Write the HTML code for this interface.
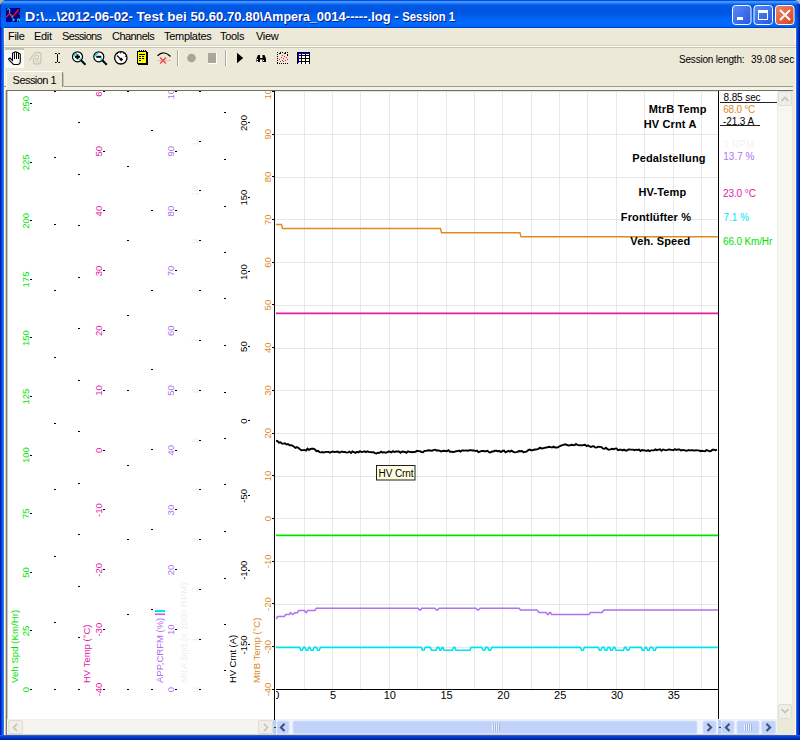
<!DOCTYPE html><html><head><meta charset="utf-8"><style>html,body{margin:0;padding:0;background:#fff;width:800px;height:740px;overflow:hidden}svg{display:block}text{font-family:"Liberation Sans",sans-serif}</style></head><body>
<svg width="800" height="740" viewBox="0 0 800 740">
<rect x="0" y="0" width="800" height="740" fill="#0054E3" shape-rendering="crispEdges" />
<rect x="0" y="0" width="800" height="1" fill="#0A48DA" shape-rendering="crispEdges" />
<rect x="0" y="1" width="800" height="1" fill="#3F98FF" shape-rendering="crispEdges" />
<rect x="0" y="2" width="800" height="1" fill="#3690FF" shape-rendering="crispEdges" />
<rect x="0" y="3" width="800" height="1" fill="#1A77F8" shape-rendering="crispEdges" />
<rect x="0" y="4" width="800" height="1" fill="#0864EE" shape-rendering="crispEdges" />
<rect x="0" y="5" width="800" height="1" fill="#045BE5" shape-rendering="crispEdges" />
<rect x="0" y="6" width="800" height="1" fill="#0057E2" shape-rendering="crispEdges" />
<rect x="0" y="7" width="800" height="1" fill="#0057E2" shape-rendering="crispEdges" />
<rect x="0" y="8" width="800" height="1" fill="#0056E1" shape-rendering="crispEdges" />
<rect x="0" y="9" width="800" height="1" fill="#0056E1" shape-rendering="crispEdges" />
<rect x="0" y="10" width="800" height="1" fill="#0056E1" shape-rendering="crispEdges" />
<rect x="0" y="11" width="800" height="1" fill="#0056E1" shape-rendering="crispEdges" />
<rect x="0" y="12" width="800" height="1" fill="#0057E3" shape-rendering="crispEdges" />
<rect x="0" y="13" width="800" height="1" fill="#0058E5" shape-rendering="crispEdges" />
<rect x="0" y="14" width="800" height="1" fill="#005AE8" shape-rendering="crispEdges" />
<rect x="0" y="15" width="800" height="1" fill="#005CEA" shape-rendering="crispEdges" />
<rect x="0" y="16" width="800" height="1" fill="#005EEC" shape-rendering="crispEdges" />
<rect x="0" y="17" width="800" height="1" fill="#0060EF" shape-rendering="crispEdges" />
<rect x="0" y="18" width="800" height="1" fill="#0062F2" shape-rendering="crispEdges" />
<rect x="0" y="19" width="800" height="1" fill="#0064F5" shape-rendering="crispEdges" />
<rect x="0" y="20" width="800" height="1" fill="#0066F8" shape-rendering="crispEdges" />
<rect x="0" y="21" width="800" height="1" fill="#0068FB" shape-rendering="crispEdges" />
<rect x="0" y="22" width="800" height="1" fill="#0069FC" shape-rendering="crispEdges" />
<rect x="0" y="23" width="800" height="1" fill="#0069FD" shape-rendering="crispEdges" />
<rect x="0" y="24" width="800" height="1" fill="#0068FC" shape-rendering="crispEdges" />
<rect x="0" y="25" width="800" height="1" fill="#0066F9" shape-rendering="crispEdges" />
<rect x="0" y="26" width="800" height="1" fill="#0060F0" shape-rendering="crispEdges" />
<rect x="0" y="27" width="800" height="1" fill="#0040D0" shape-rendering="crispEdges" />
<rect x="0" y="27" width="1" height="713" fill="#0016C8" shape-rendering="crispEdges" />
<rect x="1" y="27" width="1" height="713" fill="#0046DE" shape-rendering="crispEdges" />
<rect x="2" y="27" width="1" height="713" fill="#0A62EE" shape-rendering="crispEdges" />
<rect x="3" y="27" width="1" height="713" fill="#3A78D8" shape-rendering="crispEdges" />
<rect x="796" y="27" width="1" height="713" fill="#2A62EE" shape-rendering="crispEdges" />
<rect x="797" y="27" width="1" height="713" fill="#0046E4" shape-rendering="crispEdges" />
<rect x="798" y="27" width="1" height="713" fill="#002EC0" shape-rendering="crispEdges" />
<rect x="799" y="27" width="1" height="713" fill="#001890" shape-rendering="crispEdges" />
<defs><linearGradient id="rb" x1="0" y1="0" x2="1" y2="0"><stop offset="0" stop-color="#0058E8" stop-opacity="0"/><stop offset="1" stop-color="#0020A0"/></linearGradient></defs>
<rect x="794" y="4" width="6" height="23" fill="url(#rb)" shape-rendering="crispEdges" />
<rect x="0" y="4" width="1" height="23" fill="#0036C8" shape-rendering="crispEdges" />
<rect x="0" y="735" width="800" height="1" fill="#2A5AD8" shape-rendering="crispEdges" />
<rect x="0" y="736" width="800" height="1" fill="#0044DC" shape-rendering="crispEdges" />
<rect x="0" y="737" width="800" height="1" fill="#003AD0" shape-rendering="crispEdges" />
<rect x="0" y="738" width="800" height="1" fill="#002EB8" shape-rendering="crispEdges" />
<rect x="0" y="739" width="800" height="1" fill="#00208C" shape-rendering="crispEdges" />
<rect x="4" y="28" width="792" height="707" fill="#ECE9D8" shape-rendering="crispEdges" />
<rect x="4" y="28" width="1" height="707" fill="#FFFCE0" shape-rendering="crispEdges" />
<rect x="795" y="28" width="1" height="707" fill="#FFFCDC" shape-rendering="crispEdges" />
<path d="M0 0 H5 Q1 1 0 5 Z" fill="#C8B878"/>
<path d="M800 0 H795 Q799 1 800 5 Z" fill="#B0B8D8"/>
<rect x="6" y="8" width="14" height="14" fill="#00008C" shape-rendering="crispEdges" />
<path d="M6 17.6 L9.6 13.3 L12.3 17.2 L18.6 9.4" stroke="#FF1010" stroke-width="1.3" fill="none"/>
<path d="M18.5 12.4 H20 M19 14.4 H20.5" stroke="#FF1010" stroke-width="0.9" fill="none"/>
<path d="M7.3 9.8 Q8.5 7.8 9.6 9.6 Q10.2 11 9.2 12.8" stroke="#20E0E8" stroke-width="1.1" fill="none"/>
<path d="M10.5 14.5 L11 15 M12.3 15.5 V17.5 M12.5 18.5 L14.3 19.8 L12.5 21.3 M17.6 21.5 V19.8 Q18.5 17.8 19.4 19.8 V21.5" stroke="#20E0E8" stroke-width="1.1" fill="none"/>
<text x="25.8" y="21.8" font-size="13.6" fill="#0A1E8E" font-weight="bold" textLength="35.65" lengthAdjust="spacingAndGlyphs">D:\...\</text>
<text x="61.45" y="21.8" font-size="13.6" fill="#0A1E8E" font-weight="bold" textLength="76.15" lengthAdjust="spacingAndGlyphs">2012-06-02-&#160;</text>
<text x="137.6" y="21.8" font-size="13.6" fill="#0A1E8E" font-weight="bold" textLength="53.9" lengthAdjust="spacingAndGlyphs">Test&#160;bei&#160;</text>
<text x="191.5" y="21.8" font-size="13.6" fill="#0A1E8E" font-weight="bold" textLength="69.3" lengthAdjust="spacingAndGlyphs">50.60.70.80</text>
<text x="260.8" y="21.8" font-size="13.6" fill="#0A1E8E" font-weight="bold" textLength="57" lengthAdjust="spacingAndGlyphs">\Ampera_</text>
<text x="317.8" y="21.8" font-size="13.6" fill="#0A1E8E" font-weight="bold" textLength="85.5" lengthAdjust="spacingAndGlyphs">0014-----.log&#160;-&#160;</text>
<text x="403.3" y="21.8" font-size="13.6" fill="#0A1E8E" font-weight="bold" textLength="52.7" lengthAdjust="spacingAndGlyphs">Session&#160;1</text>
<text x="24.8" y="20.8" font-size="13.6" fill="#FFFFFF" font-weight="bold" textLength="35.65" lengthAdjust="spacingAndGlyphs">D:\...\</text>
<text x="60.45" y="20.8" font-size="13.6" fill="#FFFFFF" font-weight="bold" textLength="76.15" lengthAdjust="spacingAndGlyphs">2012-06-02-&#160;</text>
<text x="136.6" y="20.8" font-size="13.6" fill="#FFFFFF" font-weight="bold" textLength="53.9" lengthAdjust="spacingAndGlyphs">Test&#160;bei&#160;</text>
<text x="190.5" y="20.8" font-size="13.6" fill="#FFFFFF" font-weight="bold" textLength="69.3" lengthAdjust="spacingAndGlyphs">50.60.70.80</text>
<text x="259.8" y="20.8" font-size="13.6" fill="#FFFFFF" font-weight="bold" textLength="57" lengthAdjust="spacingAndGlyphs">\Ampera_</text>
<text x="316.8" y="20.8" font-size="13.6" fill="#FFFFFF" font-weight="bold" textLength="85.5" lengthAdjust="spacingAndGlyphs">0014-----.log&#160;-&#160;</text>
<text x="402.3" y="20.8" font-size="13.6" fill="#FFFFFF" font-weight="bold" textLength="52.7" lengthAdjust="spacingAndGlyphs">Session&#160;1</text>
<defs><linearGradient id="cb1" x1="0" y1="0" x2="1" y2="1"><stop offset="0" stop-color="#5A8CF8"/><stop offset="1" stop-color="#2455E0"/></linearGradient></defs>
<rect x="732.5" y="5.5" width="18.5" height="19" rx="3" ry="3" fill="url(#cb1)" stroke="#FFFFFF" stroke-width="1"/>
<rect x="737" y="17" width="6" height="3" fill="#FFFFFF" shape-rendering="crispEdges" />
<defs><linearGradient id="cb2" x1="0" y1="0" x2="1" y2="1"><stop offset="0" stop-color="#5A8CF8"/><stop offset="1" stop-color="#2455E0"/></linearGradient></defs>
<rect x="754.0" y="5.5" width="18.5" height="19" rx="3" ry="3" fill="url(#cb2)" stroke="#FFFFFF" stroke-width="1"/>
<rect x="758.5" y="10.5" width="9" height="9" fill="none" stroke="#FFFFFF" stroke-width="1"/>
<rect x="758" y="10" width="10" height="3" fill="#FFFFFF" shape-rendering="crispEdges" />
<defs><linearGradient id="cb3" x1="0" y1="0" x2="1" y2="1"><stop offset="0" stop-color="#F08868"/><stop offset="1" stop-color="#D8401E"/></linearGradient></defs>
<rect x="775.5" y="5.5" width="18.5" height="19" rx="3" ry="3" fill="url(#cb3)" stroke="#FFFFFF" stroke-width="1"/>
<path d="M780 10 L790 20 M790 10 L780 20" stroke="#FFFFFF" stroke-width="2"/>
<text x="8" y="40" font-size="11" fill="#000000" letter-spacing="-0.3">File</text>
<text x="34" y="40" font-size="11" fill="#000000" letter-spacing="-0.3">Edit</text>
<text x="62" y="40" font-size="11" fill="#000000" letter-spacing="-0.65">Sessions</text>
<text x="112" y="40" font-size="11" fill="#000000" letter-spacing="-0.55">Channels</text>
<text x="164" y="40" font-size="11" fill="#000000" letter-spacing="-0.3">Templates</text>
<text x="220" y="40" font-size="11" fill="#000000" letter-spacing="-0.3">Tools</text>
<text x="256" y="40" font-size="11" fill="#000000" letter-spacing="-0.3">View</text>
<rect x="4" y="45" width="792" height="1" fill="#D8D2BD" shape-rendering="crispEdges" />
<rect x="4" y="46" width="792" height="1" fill="#FFFFFF" shape-rendering="crispEdges" />
<rect x="4" y="47" width="792" height="1" fill="#C9C5B3" shape-rendering="crispEdges" />
<rect x="4" y="48" width="20" height="20" fill="#F4F3EE" shape-rendering="crispEdges" />
<text x="679" y="63" font-size="10" fill="#000000" letter-spacing="-0.2">Session length:</text>
<text x="751" y="63" font-size="10" fill="#000000" >39.08 sec</text>
<defs><pattern id="dith" width="2" height="2" patternUnits="userSpaceOnUse"><rect width="2" height="2" fill="#F8F7F3"/><rect width="1" height="1" fill="#FFFFFF"/><rect x="1" y="1" width="1" height="1" fill="#FFFFFF"/></pattern></defs>
<rect x="5" y="48" width="19" height="2" fill="#C9C5B3" shape-rendering="crispEdges" />
<rect x="5" y="50" width="19" height="18" fill="url(#dith)" shape-rendering="crispEdges" />
<path d="M9.5 60.5 L8.5 59 L10 58 L12.5 60.5 L12.5 53.5 Q12.5 52.5 13.5 52.5 Q14.5 52.5 14.5 53.5 L14.5 52.5 Q14.5 51.8 15.5 51.8 Q16.5 51.8 16.5 52.5 L16.5 53 Q16.5 52.2 17.5 52.2 Q18.5 52.2 18.5 53.2 L18.5 54 Q18.5 53.5 19.3 53.5 Q20.3 53.5 20.3 54.5 L20.3 61 Q20.3 64.5 17.5 64.5 L13.5 64.5 Z" fill="#FFFFFF" stroke="#000000" stroke-width="1.1"/>
<path d="M14.5 53.5 V59 M16.5 53 V59 M18.5 54 V59" stroke="#000000" stroke-width="1"/>
<path d="M29.5 60 L33 55.5 L35 53 L39 52.5 Q41 52.5 41 54.5 L41 60 Q41 64 38 64 L35 64 Q33.5 64 33.5 62 L33.5 58" fill="none" stroke="#C2BFB2" stroke-width="1.1"/>
<path d="M35 55.5 H38.5 V58.5 H35 Z M36 59 V63 M38 59 V63" fill="none" stroke="#D0CDC0" stroke-width="1"/>
<path d="M55 53.5 H56.5 L57.5 54.5 L58.5 53.5 H60 M57.5 54.5 V62 M55 62.5 H56.5 L57.5 61.5 L58.5 62.5 H60" fill="none" stroke="#000000" stroke-width="1"/>
<circle cx="77.5" cy="56.8" r="5" fill="#FFFFFF" stroke="#000000" stroke-width="1.2"/>
<path d="M73.9 56.3 A3.8 3.8 0 0 1 77.0 53.199999999999996" fill="none" stroke="#00D8E8" stroke-width="1.4"/>
<path d="M81.1 58.0 A3.8 3.8 0 0 1 78.7 60.4" fill="none" stroke="#00D8E8" stroke-width="1.4"/>
<path d="M75.0 56.8 H80.0" stroke="#000000" stroke-width="2"/>
<path d="M77.5 54.3 V59.3" stroke="#000000" stroke-width="2"/>
<path d="M81.0 60.3 L85.5 64.8" stroke="#000000" stroke-width="2"/>
<circle cx="98.8" cy="56.8" r="5" fill="#FFFFFF" stroke="#000000" stroke-width="1.2"/>
<path d="M95.2 56.3 A3.8 3.8 0 0 1 98.3 53.199999999999996" fill="none" stroke="#00D8E8" stroke-width="1.4"/>
<path d="M102.39999999999999 58.0 A3.8 3.8 0 0 1 100.0 60.4" fill="none" stroke="#00D8E8" stroke-width="1.4"/>
<path d="M96.3 56.8 H101.3" stroke="#000000" stroke-width="2"/>
<path d="M102.3 60.3 L106.8 64.8" stroke="#000000" stroke-width="2"/>
<circle cx="120.8" cy="57.8" r="6.2" fill="#FFFFFF" stroke="#000000" stroke-width="1.3"/>
<path d="M117 53 L118 54 M120.8 52 V53.4 M124.6 53 L123.6 54 M126 56 L124.8 56.6" stroke="#000000" stroke-width="1"/>
<path d="M117 55.5 L121 59.5" stroke="#000000" stroke-width="1.1"/>
<path d="M121.2 57.6 L123 59.4 L121.2 61.2 L119.4 59.4 Z" fill="#000000"/>
<rect x="138" y="52" width="10" height="13" fill="#000000" shape-rendering="crispEdges" />
<rect x="137.5" y="51.5" width="9" height="12" fill="#FFFF00" shape-rendering="crispEdges" stroke="#000000" stroke-width="1"/>
<rect x="139" y="50" width="1" height="2" fill="#000000" shape-rendering="crispEdges" />
<rect x="141" y="50" width="1" height="2" fill="#000000" shape-rendering="crispEdges" />
<rect x="143" y="50" width="1" height="2" fill="#000000" shape-rendering="crispEdges" />
<rect x="145" y="50" width="1" height="2" fill="#000000" shape-rendering="crispEdges" />
<rect x="139" y="54" width="6" height="1" fill="#000000" shape-rendering="crispEdges" />
<rect x="139" y="56" width="2" height="1" fill="#000000" shape-rendering="crispEdges" />
<rect x="142" y="56" width="2" height="1" fill="#000000" shape-rendering="crispEdges" />
<rect x="139" y="58" width="2" height="1" fill="#000000" shape-rendering="crispEdges" />
<rect x="142" y="58" width="2" height="1" fill="#000000" shape-rendering="crispEdges" />
<rect x="139" y="60" width="2" height="1" fill="#000000" shape-rendering="crispEdges" />
<path d="M157.5 55.8 Q161 52.5 164 53 Q167 53 170.5 56.5" fill="none" stroke="#000000" stroke-width="1.2"/>
<path d="M157.5 60.5 H171" stroke="#C8C8C0" stroke-width="1"/>
<path d="M160 57.5 L166 63.5 M166 57.5 L160 63.5" stroke="#FF4040" stroke-width="1.3"/>
<rect x="177" y="50" width="1" height="16" fill="#ACA899" shape-rendering="crispEdges" />
<rect x="178" y="50" width="1" height="16" fill="#FFFFFF" shape-rendering="crispEdges" />
<rect x="225" y="50" width="1" height="16" fill="#ACA899" shape-rendering="crispEdges" />
<rect x="226" y="50" width="1" height="16" fill="#FFFFFF" shape-rendering="crispEdges" />
<circle cx="191.5" cy="58" r="4.3" fill="#A8A597"/>
<rect x="208" y="53" width="8" height="10" fill="#ACA899" shape-rendering="crispEdges" />
<rect x="216" y="53" width="1" height="11" fill="#FFFFFF" shape-rendering="crispEdges" />
<rect x="208" y="63" width="9" height="1" fill="#FFFFFF" shape-rendering="crispEdges" />
<path d="M237 52.8 L243.2 58 L237 63.2 Z" fill="#000000"/>
<path d="M256.5 62 V58.5 L258 55 H260 V58 H262.5 V55 H264.5 L266 58.5 V62 H262.5 V59.5 H260 V62 Z" fill="#000000"/>
<rect x="257" y="59" width="1" height="1" fill="#FFFFFF" shape-rendering="crispEdges" />
<rect x="257" y="61" width="1" height="1" fill="#FFFFFF" shape-rendering="crispEdges" />
<rect x="263" y="60" width="1" height="1" fill="#FFFFFF" shape-rendering="crispEdges" />
<rect x="277" y="52" width="1" height="1" fill="#000000" shape-rendering="crispEdges" />
<rect x="277" y="54" width="1" height="1" fill="#000000" shape-rendering="crispEdges" />
<rect x="277" y="56" width="1" height="1" fill="#000000" shape-rendering="crispEdges" />
<rect x="277" y="58" width="1" height="1" fill="#000000" shape-rendering="crispEdges" />
<rect x="277" y="60" width="1" height="1" fill="#000000" shape-rendering="crispEdges" />
<rect x="277" y="62" width="1" height="1" fill="#000000" shape-rendering="crispEdges" />
<rect x="277" y="63" width="1" height="1" fill="#000000" shape-rendering="crispEdges" />
<rect x="279" y="63" width="1" height="1" fill="#000000" shape-rendering="crispEdges" />
<rect x="281" y="63" width="1" height="1" fill="#000000" shape-rendering="crispEdges" />
<rect x="283" y="63" width="1" height="1" fill="#000000" shape-rendering="crispEdges" />
<rect x="285" y="63" width="1" height="1" fill="#000000" shape-rendering="crispEdges" />
<rect x="287" y="63" width="1" height="1" fill="#000000" shape-rendering="crispEdges" />
<rect x="280" y="52" width="1" height="1" fill="#000000" shape-rendering="crispEdges" />
<rect x="282" y="52" width="1" height="1" fill="#000000" shape-rendering="crispEdges" />
<rect x="285" y="52" width="1" height="1" fill="#000000" shape-rendering="crispEdges" />
<rect x="287" y="52" width="1" height="1" fill="#000000" shape-rendering="crispEdges" />
<rect x="279" y="53" width="2" height="1" fill="#000000" shape-rendering="crispEdges" />
<rect x="284" y="53" width="2" height="1" fill="#000000" shape-rendering="crispEdges" />
<rect x="287" y="54" width="1" height="2" fill="#000000" shape-rendering="crispEdges" />
<rect x="279" y="59" width="1" height="1" fill="#FF2020" shape-rendering="crispEdges" />
<rect x="281" y="57" width="1" height="1" fill="#FF2020" shape-rendering="crispEdges" />
<rect x="282" y="55" width="1" height="1" fill="#FF2020" shape-rendering="crispEdges" />
<rect x="283" y="58" width="1" height="1" fill="#FF2020" shape-rendering="crispEdges" />
<rect x="284" y="56" width="1" height="1" fill="#FF2020" shape-rendering="crispEdges" />
<rect x="285" y="60" width="1" height="1" fill="#FF2020" shape-rendering="crispEdges" />
<rect x="286" y="57" width="1" height="1" fill="#FF2020" shape-rendering="crispEdges" />
<rect x="283" y="61" width="1" height="1" fill="#FF2020" shape-rendering="crispEdges" />
<rect x="280" y="61" width="1" height="1" fill="#FF2020" shape-rendering="crispEdges" />
<rect x="287" y="59" width="1" height="1" fill="#FF2020" shape-rendering="crispEdges" />
<rect x="282" y="60" width="1" height="1" fill="#FF2020" shape-rendering="crispEdges" />
<rect x="297" y="52" width="13" height="12" fill="#000000" shape-rendering="crispEdges" />
<rect x="298" y="53" width="3" height="2" fill="#FFFFFF" shape-rendering="crispEdges" />
<rect x="302" y="53" width="3" height="2" fill="#FFFFFF" shape-rendering="crispEdges" />
<rect x="306" y="53" width="3" height="2" fill="#FFFFFF" shape-rendering="crispEdges" />
<rect x="298" y="56" width="3" height="2" fill="#FFFFFF" shape-rendering="crispEdges" />
<rect x="302" y="56" width="3" height="2" fill="#FFFFFF" shape-rendering="crispEdges" />
<rect x="306" y="56" width="3" height="2" fill="#FFFFFF" shape-rendering="crispEdges" />
<rect x="298" y="59" width="3" height="2" fill="#FFFFFF" shape-rendering="crispEdges" />
<rect x="302" y="59" width="3" height="2" fill="#FFFFFF" shape-rendering="crispEdges" />
<rect x="306" y="59" width="3" height="2" fill="#FFFFFF" shape-rendering="crispEdges" />
<rect x="298" y="62" width="3" height="2" fill="#FFFFFF" shape-rendering="crispEdges" />
<rect x="302" y="62" width="3" height="2" fill="#FFFFFF" shape-rendering="crispEdges" />
<rect x="306" y="62" width="3" height="2" fill="#FFFFFF" shape-rendering="crispEdges" />
<rect x="298" y="53" width="11" height="1" fill="#0000FF" shape-rendering="crispEdges" />
<rect x="298" y="53" width="1" height="10" fill="#0000FF" shape-rendering="crispEdges" />
<rect x="4" y="86" width="789" height="1" fill="#9D9A8D" shape-rendering="crispEdges" />
<rect x="4" y="87" width="789" height="3" fill="#F6F3E6" shape-rendering="crispEdges" />
<rect x="6" y="90" width="787" height="1" fill="#716F64" shape-rendering="crispEdges" />
<path d="M6.5 88 V73 Q6.5 71.5 8 71.5 H61.5" fill="none" stroke="#FFFFFF" stroke-width="1" shape-rendering="crispEdges"/>
<rect x="7" y="72" width="55" height="18" fill="#ECE9D8" shape-rendering="crispEdges" />
<rect x="62" y="72" width="1" height="15" fill="#8F8C80" shape-rendering="crispEdges" />
<rect x="63" y="73" width="1" height="14" fill="#C8C4B4" shape-rendering="crispEdges" />
<text x="12.6" y="84.3" font-size="11" fill="#000000" letter-spacing="-0.55">Session 1</text>
<rect x="5" y="91" width="1" height="644" fill="#D0D0C0" shape-rendering="crispEdges" />
<rect x="6" y="91" width="1" height="644" fill="#7E7D6C" shape-rendering="crispEdges" />
<rect x="7" y="91" width="1" height="644" fill="#C8C8C8" shape-rendering="crispEdges" />
<rect x="8" y="91" width="769" height="628" fill="#FFFFFF" shape-rendering="crispEdges" />
<rect x="304" y="91" width="1" height="598" fill="#E8E8E8" shape-rendering="crispEdges" />
<rect x="332" y="91" width="1" height="598" fill="#E8E8E8" shape-rendering="crispEdges" />
<rect x="360" y="91" width="1" height="598" fill="#E8E8E8" shape-rendering="crispEdges" />
<rect x="389" y="91" width="1" height="598" fill="#E8E8E8" shape-rendering="crispEdges" />
<rect x="417" y="91" width="1" height="598" fill="#E8E8E8" shape-rendering="crispEdges" />
<rect x="446" y="91" width="1" height="598" fill="#E8E8E8" shape-rendering="crispEdges" />
<rect x="474" y="91" width="1" height="598" fill="#E8E8E8" shape-rendering="crispEdges" />
<rect x="502" y="91" width="1" height="598" fill="#E8E8E8" shape-rendering="crispEdges" />
<rect x="531" y="91" width="1" height="598" fill="#E8E8E8" shape-rendering="crispEdges" />
<rect x="559" y="91" width="1" height="598" fill="#E8E8E8" shape-rendering="crispEdges" />
<rect x="587" y="91" width="1" height="598" fill="#E8E8E8" shape-rendering="crispEdges" />
<rect x="616" y="91" width="1" height="598" fill="#E8E8E8" shape-rendering="crispEdges" />
<rect x="644" y="91" width="1" height="598" fill="#E8E8E8" shape-rendering="crispEdges" />
<rect x="673" y="91" width="1" height="598" fill="#E8E8E8" shape-rendering="crispEdges" />
<rect x="701" y="91" width="1" height="598" fill="#E8E8E8" shape-rendering="crispEdges" />
<rect x="275" y="647" width="443" height="1" fill="#E6E6E6" shape-rendering="crispEdges" />
<rect x="275" y="604" width="443" height="1" fill="#E6E6E6" shape-rendering="crispEdges" />
<rect x="275" y="561" width="443" height="1" fill="#E6E6E6" shape-rendering="crispEdges" />
<rect x="275" y="518" width="443" height="1" fill="#E6E6E6" shape-rendering="crispEdges" />
<rect x="275" y="476" width="443" height="1" fill="#E6E6E6" shape-rendering="crispEdges" />
<rect x="275" y="433" width="443" height="1" fill="#E6E6E6" shape-rendering="crispEdges" />
<rect x="275" y="390" width="443" height="1" fill="#E6E6E6" shape-rendering="crispEdges" />
<rect x="275" y="348" width="443" height="1" fill="#E6E6E6" shape-rendering="crispEdges" />
<rect x="275" y="305" width="443" height="1" fill="#E6E6E6" shape-rendering="crispEdges" />
<rect x="275" y="262" width="443" height="1" fill="#E6E6E6" shape-rendering="crispEdges" />
<rect x="275" y="219" width="443" height="1" fill="#E6E6E6" shape-rendering="crispEdges" />
<rect x="275" y="177" width="443" height="1" fill="#E6E6E6" shape-rendering="crispEdges" />
<rect x="275" y="134" width="443" height="1" fill="#E6E6E6" shape-rendering="crispEdges" />
<rect x="275" y="91" width="443" height="1" fill="#E6E6E6" shape-rendering="crispEdges" />
<rect x="274" y="91" width="1" height="629" fill="#000000" shape-rendering="crispEdges" />
<rect x="276" y="689" width="442" height="1" fill="#000000" shape-rendering="crispEdges" />
<rect x="718" y="91" width="1" height="629" fill="#000000" shape-rendering="crispEdges" />
<rect x="30" y="689" width="2" height="1" fill="#000000" shape-rendering="crispEdges" />
<rect x="30" y="630" width="2" height="1" fill="#000000" shape-rendering="crispEdges" />
<rect x="30" y="572" width="2" height="1" fill="#000000" shape-rendering="crispEdges" />
<rect x="30" y="513" width="2" height="1" fill="#000000" shape-rendering="crispEdges" />
<rect x="30" y="455" width="2" height="1" fill="#000000" shape-rendering="crispEdges" />
<rect x="30" y="396" width="2" height="1" fill="#000000" shape-rendering="crispEdges" />
<rect x="30" y="337" width="2" height="1" fill="#000000" shape-rendering="crispEdges" />
<rect x="30" y="279" width="2" height="1" fill="#000000" shape-rendering="crispEdges" />
<rect x="30" y="220" width="2" height="1" fill="#000000" shape-rendering="crispEdges" />
<rect x="30" y="162" width="2" height="1" fill="#000000" shape-rendering="crispEdges" />
<rect x="30" y="103" width="2" height="1" fill="#000000" shape-rendering="crispEdges" />
<rect x="54" y="689" width="2" height="1" fill="#000000" shape-rendering="crispEdges" />
<rect x="54" y="622" width="2" height="1" fill="#000000" shape-rendering="crispEdges" />
<rect x="54" y="556" width="2" height="1" fill="#000000" shape-rendering="crispEdges" />
<rect x="54" y="489" width="2" height="1" fill="#000000" shape-rendering="crispEdges" />
<rect x="54" y="423" width="2" height="1" fill="#000000" shape-rendering="crispEdges" />
<rect x="54" y="357" width="2" height="1" fill="#000000" shape-rendering="crispEdges" />
<rect x="54" y="290" width="2" height="1" fill="#000000" shape-rendering="crispEdges" />
<rect x="54" y="224" width="2" height="1" fill="#000000" shape-rendering="crispEdges" />
<rect x="54" y="157" width="2" height="1" fill="#000000" shape-rendering="crispEdges" />
<rect x="54" y="91" width="2" height="1" fill="#000000" shape-rendering="crispEdges" />
<rect x="78" y="689" width="2" height="1" fill="#000000" shape-rendering="crispEdges" />
<rect x="78" y="637" width="2" height="1" fill="#000000" shape-rendering="crispEdges" />
<rect x="78" y="586" width="2" height="1" fill="#000000" shape-rendering="crispEdges" />
<rect x="78" y="534" width="2" height="1" fill="#000000" shape-rendering="crispEdges" />
<rect x="78" y="483" width="2" height="1" fill="#000000" shape-rendering="crispEdges" />
<rect x="78" y="431" width="2" height="1" fill="#000000" shape-rendering="crispEdges" />
<rect x="78" y="380" width="2" height="1" fill="#000000" shape-rendering="crispEdges" />
<rect x="78" y="328" width="2" height="1" fill="#000000" shape-rendering="crispEdges" />
<rect x="78" y="277" width="2" height="1" fill="#000000" shape-rendering="crispEdges" />
<rect x="78" y="225" width="2" height="1" fill="#000000" shape-rendering="crispEdges" />
<rect x="78" y="174" width="2" height="1" fill="#000000" shape-rendering="crispEdges" />
<rect x="78" y="122" width="2" height="1" fill="#000000" shape-rendering="crispEdges" />
<rect x="103" y="689" width="2" height="1" fill="#000000" shape-rendering="crispEdges" />
<rect x="103" y="629" width="2" height="1" fill="#000000" shape-rendering="crispEdges" />
<rect x="103" y="569" width="2" height="1" fill="#000000" shape-rendering="crispEdges" />
<rect x="103" y="509" width="2" height="1" fill="#000000" shape-rendering="crispEdges" />
<rect x="103" y="450" width="2" height="1" fill="#000000" shape-rendering="crispEdges" />
<rect x="103" y="390" width="2" height="1" fill="#000000" shape-rendering="crispEdges" />
<rect x="103" y="330" width="2" height="1" fill="#000000" shape-rendering="crispEdges" />
<rect x="103" y="270" width="2" height="1" fill="#000000" shape-rendering="crispEdges" />
<rect x="103" y="210" width="2" height="1" fill="#000000" shape-rendering="crispEdges" />
<rect x="103" y="151" width="2" height="1" fill="#000000" shape-rendering="crispEdges" />
<rect x="103" y="91" width="2" height="1" fill="#000000" shape-rendering="crispEdges" />
<rect x="127" y="689" width="2" height="1" fill="#000000" shape-rendering="crispEdges" />
<rect x="127" y="614" width="2" height="1" fill="#000000" shape-rendering="crispEdges" />
<rect x="127" y="539" width="2" height="1" fill="#000000" shape-rendering="crispEdges" />
<rect x="127" y="465" width="2" height="1" fill="#000000" shape-rendering="crispEdges" />
<rect x="127" y="390" width="2" height="1" fill="#000000" shape-rendering="crispEdges" />
<rect x="127" y="315" width="2" height="1" fill="#000000" shape-rendering="crispEdges" />
<rect x="127" y="240" width="2" height="1" fill="#000000" shape-rendering="crispEdges" />
<rect x="127" y="166" width="2" height="1" fill="#000000" shape-rendering="crispEdges" />
<rect x="127" y="91" width="2" height="1" fill="#000000" shape-rendering="crispEdges" />
<rect x="151" y="689" width="2" height="1" fill="#000000" shape-rendering="crispEdges" />
<rect x="151" y="609" width="2" height="1" fill="#000000" shape-rendering="crispEdges" />
<rect x="151" y="529" width="2" height="1" fill="#000000" shape-rendering="crispEdges" />
<rect x="151" y="449" width="2" height="1" fill="#000000" shape-rendering="crispEdges" />
<rect x="151" y="369" width="2" height="1" fill="#000000" shape-rendering="crispEdges" />
<rect x="151" y="290" width="2" height="1" fill="#000000" shape-rendering="crispEdges" />
<rect x="151" y="210" width="2" height="1" fill="#000000" shape-rendering="crispEdges" />
<rect x="151" y="130" width="2" height="1" fill="#000000" shape-rendering="crispEdges" />
<rect x="175" y="689" width="2" height="1" fill="#000000" shape-rendering="crispEdges" />
<rect x="175" y="629" width="2" height="1" fill="#000000" shape-rendering="crispEdges" />
<rect x="175" y="569" width="2" height="1" fill="#000000" shape-rendering="crispEdges" />
<rect x="175" y="509" width="2" height="1" fill="#000000" shape-rendering="crispEdges" />
<rect x="175" y="450" width="2" height="1" fill="#000000" shape-rendering="crispEdges" />
<rect x="175" y="390" width="2" height="1" fill="#000000" shape-rendering="crispEdges" />
<rect x="175" y="330" width="2" height="1" fill="#000000" shape-rendering="crispEdges" />
<rect x="175" y="270" width="2" height="1" fill="#000000" shape-rendering="crispEdges" />
<rect x="175" y="210" width="2" height="1" fill="#000000" shape-rendering="crispEdges" />
<rect x="175" y="151" width="2" height="1" fill="#000000" shape-rendering="crispEdges" />
<rect x="175" y="91" width="2" height="1" fill="#000000" shape-rendering="crispEdges" />
<rect x="199" y="689" width="2" height="1" fill="#000000" shape-rendering="crispEdges" />
<rect x="199" y="639" width="2" height="1" fill="#000000" shape-rendering="crispEdges" />
<rect x="199" y="589" width="2" height="1" fill="#000000" shape-rendering="crispEdges" />
<rect x="199" y="539" width="2" height="1" fill="#000000" shape-rendering="crispEdges" />
<rect x="199" y="489" width="2" height="1" fill="#000000" shape-rendering="crispEdges" />
<rect x="199" y="440" width="2" height="1" fill="#000000" shape-rendering="crispEdges" />
<rect x="199" y="390" width="2" height="1" fill="#000000" shape-rendering="crispEdges" />
<rect x="199" y="340" width="2" height="1" fill="#000000" shape-rendering="crispEdges" />
<rect x="199" y="290" width="2" height="1" fill="#000000" shape-rendering="crispEdges" />
<rect x="199" y="240" width="2" height="1" fill="#000000" shape-rendering="crispEdges" />
<rect x="199" y="190" width="2" height="1" fill="#000000" shape-rendering="crispEdges" />
<rect x="199" y="141" width="2" height="1" fill="#000000" shape-rendering="crispEdges" />
<rect x="199" y="91" width="2" height="1" fill="#000000" shape-rendering="crispEdges" />
<rect x="224" y="112" width="2" height="1" fill="#000000" shape-rendering="crispEdges" />
<rect x="224" y="159" width="2" height="1" fill="#000000" shape-rendering="crispEdges" />
<rect x="224" y="206" width="2" height="1" fill="#000000" shape-rendering="crispEdges" />
<rect x="224" y="252" width="2" height="1" fill="#000000" shape-rendering="crispEdges" />
<rect x="224" y="298" width="2" height="1" fill="#000000" shape-rendering="crispEdges" />
<rect x="224" y="345" width="2" height="1" fill="#000000" shape-rendering="crispEdges" />
<rect x="224" y="392" width="2" height="1" fill="#000000" shape-rendering="crispEdges" />
<rect x="224" y="438" width="2" height="1" fill="#000000" shape-rendering="crispEdges" />
<rect x="224" y="484" width="2" height="1" fill="#000000" shape-rendering="crispEdges" />
<rect x="224" y="531" width="2" height="1" fill="#000000" shape-rendering="crispEdges" />
<rect x="224" y="578" width="2" height="1" fill="#000000" shape-rendering="crispEdges" />
<rect x="224" y="624" width="2" height="1" fill="#000000" shape-rendering="crispEdges" />
<rect x="224" y="670" width="2" height="1" fill="#000000" shape-rendering="crispEdges" />
<rect x="248" y="122" width="2" height="1" fill="#000000" shape-rendering="crispEdges" />
<rect x="248" y="197" width="2" height="1" fill="#000000" shape-rendering="crispEdges" />
<rect x="248" y="271" width="2" height="1" fill="#000000" shape-rendering="crispEdges" />
<rect x="248" y="346" width="2" height="1" fill="#000000" shape-rendering="crispEdges" />
<rect x="248" y="420" width="2" height="1" fill="#000000" shape-rendering="crispEdges" />
<rect x="248" y="495" width="2" height="1" fill="#000000" shape-rendering="crispEdges" />
<rect x="248" y="570" width="2" height="1" fill="#000000" shape-rendering="crispEdges" />
<rect x="248" y="644" width="2" height="1" fill="#000000" shape-rendering="crispEdges" />
<rect x="272" y="689" width="2" height="1" fill="#000000" shape-rendering="crispEdges" />
<rect x="272" y="646" width="2" height="1" fill="#000000" shape-rendering="crispEdges" />
<rect x="272" y="603" width="2" height="1" fill="#000000" shape-rendering="crispEdges" />
<rect x="272" y="561" width="2" height="1" fill="#000000" shape-rendering="crispEdges" />
<rect x="272" y="518" width="2" height="1" fill="#000000" shape-rendering="crispEdges" />
<rect x="272" y="475" width="2" height="1" fill="#000000" shape-rendering="crispEdges" />
<rect x="272" y="433" width="2" height="1" fill="#000000" shape-rendering="crispEdges" />
<rect x="272" y="390" width="2" height="1" fill="#000000" shape-rendering="crispEdges" />
<rect x="272" y="347" width="2" height="1" fill="#000000" shape-rendering="crispEdges" />
<rect x="272" y="304" width="2" height="1" fill="#000000" shape-rendering="crispEdges" />
<rect x="272" y="262" width="2" height="1" fill="#000000" shape-rendering="crispEdges" />
<rect x="272" y="219" width="2" height="1" fill="#000000" shape-rendering="crispEdges" />
<rect x="272" y="176" width="2" height="1" fill="#000000" shape-rendering="crispEdges" />
<rect x="272" y="134" width="2" height="1" fill="#000000" shape-rendering="crispEdges" />
<rect x="272" y="91" width="2" height="1" fill="#000000" shape-rendering="crispEdges" />
<defs><clipPath id="pc"><rect x="8" y="91" width="710" height="628"/></clipPath></defs>
<g clip-path="url(#pc)">
<text transform="translate(29.4,689.5) rotate(-90)" font-size="9.5" fill="#00E400" text-anchor="middle" >0</text>
<text transform="translate(29.4,630.9) rotate(-90)" font-size="9.5" fill="#00E400" text-anchor="middle" >25</text>
<text transform="translate(29.4,572.4) rotate(-90)" font-size="9.5" fill="#00E400" text-anchor="middle" >50</text>
<text transform="translate(29.4,513.8) rotate(-90)" font-size="9.5" fill="#00E400" text-anchor="middle" >75</text>
<text transform="translate(29.4,455.2) rotate(-90)" font-size="9.5" fill="#00E400" text-anchor="middle" >100</text>
<text transform="translate(29.4,396.6) rotate(-90)" font-size="9.5" fill="#00E400" text-anchor="middle" >125</text>
<text transform="translate(29.4,338.1) rotate(-90)" font-size="9.5" fill="#00E400" text-anchor="middle" >150</text>
<text transform="translate(29.4,279.5) rotate(-90)" font-size="9.5" fill="#00E400" text-anchor="middle" >175</text>
<text transform="translate(29.4,220.9) rotate(-90)" font-size="9.5" fill="#00E400" text-anchor="middle" >200</text>
<text transform="translate(29.4,162.4) rotate(-90)" font-size="9.5" fill="#00E400" text-anchor="middle" >225</text>
<text transform="translate(29.4,103.8) rotate(-90)" font-size="9.5" fill="#00E400" text-anchor="middle" >250</text>
<text transform="translate(102.4,689.5) rotate(-90)" font-size="9.5" fill="#E020A8" text-anchor="middle" >-40</text>
<text transform="translate(102.4,629.7) rotate(-90)" font-size="9.5" fill="#E020A8" text-anchor="middle" >-30</text>
<text transform="translate(102.4,569.9) rotate(-90)" font-size="9.5" fill="#E020A8" text-anchor="middle" >-20</text>
<text transform="translate(102.4,510.1) rotate(-90)" font-size="9.5" fill="#E020A8" text-anchor="middle" >-10</text>
<text transform="translate(102.4,450.3) rotate(-90)" font-size="9.5" fill="#E020A8" text-anchor="middle" >0</text>
<text transform="translate(102.4,390.5) rotate(-90)" font-size="9.5" fill="#E020A8" text-anchor="middle" >10</text>
<text transform="translate(102.4,330.7) rotate(-90)" font-size="9.5" fill="#E020A8" text-anchor="middle" >20</text>
<text transform="translate(102.4,270.9) rotate(-90)" font-size="9.5" fill="#E020A8" text-anchor="middle" >30</text>
<text transform="translate(102.4,211.1) rotate(-90)" font-size="9.5" fill="#E020A8" text-anchor="middle" >40</text>
<text transform="translate(102.4,151.3) rotate(-90)" font-size="9.5" fill="#E020A8" text-anchor="middle" >50</text>
<text transform="translate(102.4,91.5) rotate(-90)" font-size="9.5" fill="#E020A8" text-anchor="middle" >60</text>
<text transform="translate(174.4,689.5) rotate(-90)" font-size="9.5" fill="#B070F0" text-anchor="middle" >0</text>
<text transform="translate(174.4,629.7) rotate(-90)" font-size="9.5" fill="#B070F0" text-anchor="middle" >10</text>
<text transform="translate(174.4,569.9) rotate(-90)" font-size="9.5" fill="#B070F0" text-anchor="middle" >20</text>
<text transform="translate(174.4,510.1) rotate(-90)" font-size="9.5" fill="#B070F0" text-anchor="middle" >30</text>
<text transform="translate(174.4,450.3) rotate(-90)" font-size="9.5" fill="#B070F0" text-anchor="middle" >40</text>
<text transform="translate(174.4,390.5) rotate(-90)" font-size="9.5" fill="#B070F0" text-anchor="middle" >50</text>
<text transform="translate(174.4,330.7) rotate(-90)" font-size="9.5" fill="#B070F0" text-anchor="middle" >60</text>
<text transform="translate(174.4,270.9) rotate(-90)" font-size="9.5" fill="#B070F0" text-anchor="middle" >70</text>
<text transform="translate(174.4,211.1) rotate(-90)" font-size="9.5" fill="#B070F0" text-anchor="middle" >80</text>
<text transform="translate(174.4,151.3) rotate(-90)" font-size="9.5" fill="#B070F0" text-anchor="middle" >90</text>
<text transform="translate(174.4,91.5) rotate(-90)" font-size="9.5" fill="#B070F0" text-anchor="middle" >100</text>
<text transform="translate(247.4,123.0) rotate(-90)" font-size="9.5" fill="#000000" text-anchor="middle" >200</text>
<text transform="translate(247.4,197.6) rotate(-90)" font-size="9.5" fill="#000000" text-anchor="middle" >150</text>
<text transform="translate(247.4,272.1) rotate(-90)" font-size="9.5" fill="#000000" text-anchor="middle" >100</text>
<text transform="translate(247.4,346.6) rotate(-90)" font-size="9.5" fill="#000000" text-anchor="middle" >50</text>
<text transform="translate(247.4,421.2) rotate(-90)" font-size="9.5" fill="#000000" text-anchor="middle" >0</text>
<text transform="translate(247.4,495.8) rotate(-90)" font-size="9.5" fill="#000000" text-anchor="middle" >-50</text>
<text transform="translate(247.4,570.3) rotate(-90)" font-size="9.5" fill="#000000" text-anchor="middle" >-100</text>
<text transform="translate(247.4,644.9) rotate(-90)" font-size="9.5" fill="#000000" text-anchor="middle" >-150</text>
<text transform="translate(271.4,689.5) rotate(-90)" font-size="9.5" fill="#E08A1E" text-anchor="middle" >-40</text>
<text transform="translate(271.4,646.8) rotate(-90)" font-size="9.5" fill="#E08A1E" text-anchor="middle" >-30</text>
<text transform="translate(271.4,604.1) rotate(-90)" font-size="9.5" fill="#E08A1E" text-anchor="middle" >-20</text>
<text transform="translate(271.4,561.4) rotate(-90)" font-size="9.5" fill="#E08A1E" text-anchor="middle" >-10</text>
<text transform="translate(271.4,518.7) rotate(-90)" font-size="9.5" fill="#E08A1E" text-anchor="middle" >0</text>
<text transform="translate(271.4,475.9) rotate(-90)" font-size="9.5" fill="#E08A1E" text-anchor="middle" >10</text>
<text transform="translate(271.4,433.2) rotate(-90)" font-size="9.5" fill="#E08A1E" text-anchor="middle" >20</text>
<text transform="translate(271.4,390.5) rotate(-90)" font-size="9.5" fill="#E08A1E" text-anchor="middle" >30</text>
<text transform="translate(271.4,347.8) rotate(-90)" font-size="9.5" fill="#E08A1E" text-anchor="middle" >40</text>
<text transform="translate(271.4,305.1) rotate(-90)" font-size="9.5" fill="#E08A1E" text-anchor="middle" >50</text>
<text transform="translate(271.4,262.4) rotate(-90)" font-size="9.5" fill="#E08A1E" text-anchor="middle" >60</text>
<text transform="translate(271.4,219.7) rotate(-90)" font-size="9.5" fill="#E08A1E" text-anchor="middle" >70</text>
<text transform="translate(271.4,177.0) rotate(-90)" font-size="9.5" fill="#E08A1E" text-anchor="middle" >80</text>
<text transform="translate(271.4,134.3) rotate(-90)" font-size="9.5" fill="#E08A1E" text-anchor="middle" >90</text>
<text transform="translate(271.4,91.6) rotate(-90)" font-size="9.5" fill="#E08A1E" text-anchor="middle" >100</text>
</g>
<text transform="translate(17.7,683.0) rotate(-90)" font-size="9.5" fill="#00E400" text-anchor="start" letter-spacing="0.1">Veh Spd (Km/Hr)</text>
<text transform="translate(90.3,683.0) rotate(-90)" font-size="9.5" fill="#E020A8" text-anchor="start" >HV Temp (°C)</text>
<text transform="translate(163.0,683.0) rotate(-90)" font-size="9.5" fill="#B070F0" text-anchor="start" >APP,CRFM (%)</text>
<text transform="translate(235.6,683.0) rotate(-90)" font-size="9.5" fill="#000000" text-anchor="start" letter-spacing="-0.1">HV Crnt (A)</text>
<text transform="translate(259.8,683.0) rotate(-90)" font-size="9.5" fill="#E08A1E" text-anchor="start" >MtrB Temp (°C)</text>
<rect x="155" y="610" width="10" height="2" fill="#00E4F0" shape-rendering="crispEdges" />
<rect x="155" y="613.4" width="10" height="1.7" fill="#B070F0"/>
<text transform="translate(187.2,683.0) rotate(-90)" font-size="9.5" fill="#EFEFEF" text-anchor="start" >MtrA Spd (x 1000 RPM)</text>
<text transform="translate(198.4,689.5) rotate(-90)" font-size="9.5" fill="#F0F0F0" text-anchor="middle" >0</text>
<text transform="translate(198.4,639.7) rotate(-90)" font-size="9.5" fill="#F0F0F0" text-anchor="middle" >1</text>
<text transform="translate(198.4,589.8) rotate(-90)" font-size="9.5" fill="#F0F0F0" text-anchor="middle" >2</text>
<text transform="translate(198.4,540.0) rotate(-90)" font-size="9.5" fill="#F0F0F0" text-anchor="middle" >3</text>
<text transform="translate(198.4,490.2) rotate(-90)" font-size="9.5" fill="#F0F0F0" text-anchor="middle" >4</text>
<text transform="translate(198.4,440.3) rotate(-90)" font-size="9.5" fill="#F0F0F0" text-anchor="middle" >5</text>
<text transform="translate(198.4,390.5) rotate(-90)" font-size="9.5" fill="#F0F0F0" text-anchor="middle" >6</text>
<text transform="translate(198.4,340.7) rotate(-90)" font-size="9.5" fill="#F0F0F0" text-anchor="middle" >7</text>
<text transform="translate(198.4,290.9) rotate(-90)" font-size="9.5" fill="#F0F0F0" text-anchor="middle" >8</text>
<text transform="translate(198.4,241.0) rotate(-90)" font-size="9.5" fill="#F0F0F0" text-anchor="middle" >9</text>
<text transform="translate(198.4,191.2) rotate(-90)" font-size="9.5" fill="#F0F0F0" text-anchor="middle" >10</text>
<text transform="translate(198.4,141.4) rotate(-90)" font-size="9.5" fill="#F0F0F0" text-anchor="middle" >11</text>
<defs><clipPath id="tc"><rect x="276" y="690" width="442" height="20"/></clipPath></defs><g clip-path="url(#tc)">
<text x="276.2" y="699" font-size="11" fill="#000000" text-anchor="middle">0</text>
<text x="333.0" y="699" font-size="11" fill="#000000" text-anchor="middle">5</text>
<text x="389.8" y="699" font-size="11" fill="#000000" text-anchor="middle">10</text>
<text x="446.6" y="699" font-size="11" fill="#000000" text-anchor="middle">15</text>
<text x="503.4" y="699" font-size="11" fill="#000000" text-anchor="middle">20</text>
<text x="560.2" y="699" font-size="11" fill="#000000" text-anchor="middle">25</text>
<text x="617.0" y="699" font-size="11" fill="#000000" text-anchor="middle">30</text>
<text x="673.8" y="699" font-size="11" fill="#000000" text-anchor="middle">35</text>
</g>
<rect x="274" y="690" width="1" height="30" fill="#000000" shape-rendering="crispEdges" />
<polyline points="276.00,224.50 281.50,224.50 282.50,228.50 440.50,228.50 441.50,232.80 520.00,232.80 521.00,236.80 718.00,236.80" fill="none" stroke="#E08A1E" stroke-width="1.4" stroke-linejoin="miter" />
<polyline points="276.00,313.40 718.00,313.40" fill="none" stroke="#E020A8" stroke-width="1.6" stroke-linejoin="miter" />
<polyline points="276.00,535.40 718.00,535.40" fill="none" stroke="#00E400" stroke-width="1.8" stroke-linejoin="miter" />
<polyline points="276.50,619.30 277.50,616.40 284.30,616.40 285.60,614.60 289.30,614.60 290.40,612.70 292.75,614.60 294.60,612.70 297.40,612.70 298.70,610.40 304.30,610.40 306.20,612.70 307.75,610.40 315.00,610.40 316.20,608.30 418.00,608.30 419.50,610.00 420.50,610.00 421.50,608.30 435.00,608.30 436.50,610.00 437.50,610.00 439.00,608.30 476.00,608.30 477.50,610.00 478.50,610.00 480.00,608.30 519.00,608.30 520.50,610.00 537.00,610.00 539.00,612.40 546.00,612.40 547.50,614.40 548.50,614.40 549.50,612.40 550.50,612.40 551.50,614.40 589.00,614.40 590.50,612.40 602.00,612.40 604.00,610.00 718.00,610.00" fill="none" stroke="#B070F0" stroke-width="1.5" stroke-linejoin="miter" />
<polyline points="276.00,647.40 299.55,647.40 300.75,650.20 302.25,650.20 303.45,647.40 305.05,647.40 306.25,650.20 307.75,650.20 308.95,647.40 309.80,647.40 311.00,650.20 313.00,650.20 314.20,647.40 316.55,647.40 317.75,650.20 319.25,650.20 320.45,647.40 421.30,647.40 422.50,650.20 424.00,650.20 425.20,647.40 430.30,647.40 431.50,650.20 436.00,650.20 437.20,647.40 438.80,647.40 440.00,650.20 441.00,650.20 442.20,647.40 442.80,647.40 444.00,650.20 452.50,650.20 453.70,647.40 454.80,647.40 456.00,650.20 470.00,650.20 471.20,647.40 481.80,647.40 483.00,650.20 484.50,650.20 485.70,647.40 487.80,647.40 489.00,650.20 490.50,650.20 491.70,647.40 580.45,647.40 581.65,650.20 583.15,650.20 584.35,647.40 598.25,647.40 599.45,650.20 600.95,650.20 602.15,647.40 604.05,647.40 605.25,650.20 606.75,650.20 607.95,647.40 609.65,647.40 610.85,650.20 612.35,650.20 613.55,647.40 614.80,647.40 616.00,650.20 623.40,650.20 624.60,647.40 625.95,647.40 627.15,650.20 628.65,650.20 629.85,647.40 641.25,647.40 642.45,650.20 643.95,650.20 645.15,647.40 646.35,647.40 647.55,650.20 649.05,650.20 650.25,647.40 652.55,647.40 653.75,650.20 655.25,650.20 656.45,647.40 718.00,647.40" fill="none" stroke="#00E4F0" stroke-width="1.6" stroke-linejoin="miter" />
<polyline points="276.00,440.68 277.50,441.05 279.00,442.64 280.50,442.28 282.00,443.65 283.50,443.62 285.00,443.33 286.50,444.41 288.00,444.07 289.50,445.29 291.00,445.14 292.50,445.68 294.00,446.70 295.50,447.82 297.00,447.07 298.50,448.00 300.00,449.28 301.50,450.31 303.00,450.09 304.50,449.95 306.00,450.65 307.50,448.64 309.00,450.05 310.50,449.02 312.00,448.76 313.50,448.71 315.00,449.56 316.50,451.22 318.00,450.83 319.50,452.10 321.00,452.38 322.50,452.07 324.00,452.55 325.50,451.85 327.00,451.89 328.50,451.95 330.00,452.60 331.50,451.94 333.00,451.57 334.50,452.05 336.00,451.82 337.50,451.54 339.00,452.43 340.50,452.26 342.00,451.44 343.50,452.03 345.00,451.95 346.50,452.58 348.00,452.31 349.50,451.55 351.00,452.90 352.50,451.45 354.00,452.10 355.50,452.81 357.00,451.82 358.50,452.32 360.00,451.20 361.50,452.02 363.00,451.88 364.50,451.39 366.00,452.12 367.50,451.28 369.00,452.15 370.50,452.15 372.00,452.30 373.50,452.25 375.00,453.10 376.50,453.44 378.00,452.75 379.50,452.88 381.00,451.58 382.50,452.52 384.00,452.21 385.50,452.70 387.00,452.45 388.50,451.53 390.00,451.76 391.50,452.32 393.00,451.21 394.50,452.05 396.00,451.57 397.50,451.53 399.00,451.47 400.50,452.77 402.00,451.57 403.50,451.74 405.00,451.95 406.50,452.77 408.00,451.31 409.50,451.92 411.00,451.93 412.50,452.29 414.00,451.93 415.50,451.87 417.00,450.86 418.50,451.15 420.00,451.10 421.50,452.09 423.00,452.26 424.50,450.86 426.00,450.72 427.50,450.52 429.00,450.22 430.50,450.48 432.00,450.69 433.50,450.12 435.00,449.67 436.50,450.44 438.00,450.37 439.50,450.75 441.00,451.46 442.50,451.01 444.00,450.71 445.50,450.95 447.00,451.16 448.50,450.14 450.00,451.77 451.50,451.66 453.00,451.93 454.50,451.90 456.00,451.18 457.50,451.15 459.00,450.58 460.50,451.50 462.00,450.43 463.50,450.39 465.00,450.61 466.50,450.49 468.00,450.77 469.50,450.21 471.00,450.15 472.50,450.50 474.00,450.48 475.50,451.03 477.00,450.50 478.50,452.10 480.00,451.71 481.50,450.87 483.00,451.05 484.50,451.23 486.00,451.26 487.50,450.82 489.00,452.13 490.50,452.39 492.00,451.44 493.50,451.47 495.00,450.75 496.50,450.78 498.00,451.22 499.50,451.08 501.00,452.09 502.50,450.89 504.00,450.64 505.50,452.31 507.00,451.55 508.50,450.86 510.00,451.58 511.50,450.65 513.00,451.55 514.50,452.36 516.00,452.15 517.50,451.85 519.00,451.07 520.50,451.29 522.00,451.02 523.50,452.20 525.00,451.86 526.50,451.70 528.00,450.29 529.50,449.50 531.00,450.20 532.50,450.27 534.00,449.79 535.50,449.47 537.00,449.25 538.50,448.87 540.00,447.71 541.50,448.41 543.00,448.30 544.50,447.89 546.00,447.55 547.50,447.40 549.00,446.77 550.50,447.13 552.00,447.56 553.50,446.60 555.00,447.44 556.50,447.48 558.00,447.38 559.50,446.27 561.00,445.66 562.50,445.16 564.00,444.59 565.50,444.27 567.00,445.02 568.50,445.52 570.00,445.41 571.50,444.73 573.00,445.02 574.50,445.25 576.00,443.93 577.50,444.94 579.00,445.36 580.50,445.18 582.00,445.33 583.50,445.05 585.00,444.72 586.50,446.03 588.00,445.42 589.50,446.47 591.00,447.00 592.50,446.19 594.00,446.42 595.50,447.63 597.00,447.45 598.50,446.68 600.00,446.83 601.50,447.10 603.00,448.68 604.50,448.73 606.00,447.76 607.50,449.21 609.00,449.71 610.50,449.31 612.00,448.83 613.50,449.26 615.00,448.59 616.50,448.45 618.00,450.25 619.50,449.74 621.00,449.60 622.50,450.41 624.00,449.58 625.50,450.44 627.00,450.44 628.50,449.40 630.00,449.55 631.50,449.66 633.00,449.59 634.50,450.25 636.00,449.69 637.50,450.00 639.00,449.52 640.50,450.95 642.00,449.98 643.50,450.19 645.00,450.45 646.50,451.06 648.00,450.22 649.50,451.14 651.00,450.38 652.50,450.41 654.00,450.36 655.50,449.42 657.00,450.15 658.50,449.66 660.00,449.31 661.50,450.66 663.00,449.46 664.50,449.93 666.00,450.31 667.50,449.93 669.00,449.44 670.50,449.74 672.00,449.85 673.50,450.29 675.00,449.11 676.50,449.96 678.00,449.43 679.50,449.52 681.00,450.45 682.50,450.01 684.00,450.14 685.50,450.53 687.00,450.84 688.50,450.03 690.00,450.37 691.50,450.21 693.00,450.26 694.50,450.62 696.00,450.22 697.50,450.40 699.00,450.34 700.50,451.19 702.00,450.76 703.50,451.08 705.00,451.20 706.50,449.97 708.00,450.51 709.50,451.20 711.00,451.01 712.50,449.75 714.00,449.72 715.50,450.30 717.00,449.63" fill="none" stroke="#000000" stroke-width="1.9" stroke-linejoin="miter" />
<rect x="376.5" y="465.5" width="38.5" height="14.5" fill="#FFFFE1" stroke="#202020" stroke-width="1"/>
<text x="378.6" y="477.4" font-size="10" fill="#000000" letter-spacing="-0.1">HV Crnt</text>
<text x="648.7" y="113" font-size="11" fill="#000000" font-weight="bold" letter-spacing="0.15">MtrB Temp</text>
<text x="643.7" y="127.7" font-size="11" fill="#000000" font-weight="bold" letter-spacing="0.15">HV Crnt A</text>
<text x="632.2" y="161.7" font-size="11" fill="#000000" font-weight="bold" letter-spacing="0.15">Pedalstellung</text>
<text x="638.5" y="196" font-size="11" fill="#000000" font-weight="bold" letter-spacing="0.15">HV-Temp</text>
<text x="620.8" y="220.75" font-size="11" fill="#000000" font-weight="bold" letter-spacing="0.15">Frontlüfter %</text>
<text x="630.25" y="245.2" font-size="11" fill="#000000" font-weight="bold" letter-spacing="0.15">Veh. Speed</text>
<text x="723.5" y="100.6" font-size="10" fill="#000000" letter-spacing="-0.1">8.85 sec</text>
<rect x="720" y="102" width="57" height="1" fill="#202020" shape-rendering="crispEdges" />
<text x="723.3" y="112.7" font-size="10" fill="#E08A1E" letter-spacing="-0.25">68.0 °C</text>
<text x="723" y="124.8" font-size="10" fill="#000000" letter-spacing="-0.1">-21.3 A</text>
<rect x="720" y="125" width="40" height="1" fill="#202020" shape-rendering="crispEdges" />
<text x="723.5" y="147.7" font-size="10" fill="#F3F3F3" >1 RPM</text>
<text x="723.3" y="159.7" font-size="10" fill="#B070F0" >13.7 %</text>
<text x="723" y="196.8" font-size="10" fill="#E020A8" letter-spacing="-0.1">23.0 °C</text>
<text x="723.5" y="220.9" font-size="10" fill="#00E4F0" >7.1 %</text>
<text x="723" y="244.8" font-size="10" fill="#00E400" letter-spacing="-0.15">66.0 Km/Hr</text>
<rect x="777" y="91" width="15" height="628" fill="#F7F6F1" shape-rendering="crispEdges" />
<rect x="777" y="91" width="1" height="628" fill="#EEEDE5" shape-rendering="crispEdges" />
<rect x="778.5" y="91.5" width="13" height="14" rx="1.5" fill="#EFEEE8" stroke="#E0DED4"/>
<path d="M781.5 101 L785 97.5 L788.5 101" fill="none" stroke="#C4C2B6" stroke-width="1.6"/>
<rect x="778.5" y="704.5" width="13" height="14" rx="1.5" fill="#EFEEE8" stroke="#E0DED4"/>
<path d="M781.5 709 L785 712.5 L788.5 709" fill="none" stroke="#C4C2B6" stroke-width="1.6"/>
<rect x="7" y="719" width="770" height="1" fill="#F2F0E8" shape-rendering="crispEdges" />
<rect x="7" y="720" width="266" height="14" fill="#F5F4EF" shape-rendering="crispEdges" />
<rect x="8.5" y="720.5" width="14" height="13" rx="1.5" fill="#EFEEE8" stroke="#E0DED4"/>
<path d="M17 724 L13.5 727.5 L17 731" fill="none" stroke="#C4C2B6" stroke-width="1.6"/>
<rect x="258.5" y="720.5" width="14" height="13" rx="1.5" fill="#EFEEE8" stroke="#E0DED4"/>
<path d="M264 724 L267.5 727.5 L264 731" fill="none" stroke="#C4C2B6" stroke-width="1.6"/>
<rect x="274" y="719" width="1" height="1" fill="#000000" shape-rendering="crispEdges" />
<rect x="276" y="720" width="442" height="14" fill="#F1F5FE" shape-rendering="crispEdges" />
<rect x="721" y="720" width="56" height="14" fill="#F1F5FE" shape-rendering="crispEdges" />
<rect x="273" y="720" width="3" height="15" fill="#B8CFF6" shape-rendering="crispEdges" />
<rect x="273.5" y="727" width="2" height="1" fill="#2A3550" shape-rendering="crispEdges" />
<rect x="718" y="720" width="3" height="15" fill="#B8CFF6" shape-rendering="crispEdges" />
<rect x="718.5" y="727" width="2" height="1" fill="#2A3550" shape-rendering="crispEdges" />
<rect x="277.0" y="721.0" width="12" height="12.5" rx="1.5" fill="#C1D2FB" stroke="#D5E0FC"/>
<path d="M284.5 723.8 L280.9 727.4 L284.5 731" fill="none" stroke="#3E5380" stroke-width="2.1"/>
<rect x="293.0" y="721.0" width="404" height="12.5" rx="1.5" fill="#C1D2FB" stroke="#D5E0FC"/>
<rect x="492" y="724" width="1" height="7" fill="#EEF3FE" shape-rendering="crispEdges" />
<rect x="493" y="724" width="1" height="7" fill="#9DB3E2" shape-rendering="crispEdges" />
<rect x="494" y="724" width="1" height="7" fill="#EEF3FE" shape-rendering="crispEdges" />
<rect x="495" y="724" width="1" height="7" fill="#9DB3E2" shape-rendering="crispEdges" />
<rect x="496" y="724" width="1" height="7" fill="#EEF3FE" shape-rendering="crispEdges" />
<rect x="497" y="724" width="1" height="7" fill="#9DB3E2" shape-rendering="crispEdges" />
<rect x="498" y="724" width="1" height="7" fill="#EEF3FE" shape-rendering="crispEdges" />
<rect x="499" y="724" width="1" height="7" fill="#9DB3E2" shape-rendering="crispEdges" />
<rect x="703.0" y="721.0" width="13" height="12.5" rx="1.5" fill="#C1D2FB" stroke="#D5E0FC"/>
<path d="M707.5 723.8 L711.1 727.4 L707.5 731" fill="none" stroke="#3E5380" stroke-width="2.1"/>
<rect x="721.5" y="721.0" width="12.5" height="12.5" rx="1.5" fill="#C1D2FB" stroke="#D5E0FC"/>
<path d="M729.5 723.8 L725.9 727.4 L729.5 731" fill="none" stroke="#3E5380" stroke-width="2.1"/>
<rect x="737.0" y="721.0" width="22" height="12.5" rx="1.5" fill="#C1D2FB" stroke="#D5E0FC"/>
<rect x="744" y="724" width="1" height="7" fill="#EEF3FE" shape-rendering="crispEdges" />
<rect x="745" y="724" width="1" height="7" fill="#9DB3E2" shape-rendering="crispEdges" />
<rect x="746" y="724" width="1" height="7" fill="#EEF3FE" shape-rendering="crispEdges" />
<rect x="747" y="724" width="1" height="7" fill="#9DB3E2" shape-rendering="crispEdges" />
<rect x="748" y="724" width="1" height="7" fill="#EEF3FE" shape-rendering="crispEdges" />
<rect x="749" y="724" width="1" height="7" fill="#9DB3E2" shape-rendering="crispEdges" />
<rect x="750" y="724" width="1" height="7" fill="#EEF3FE" shape-rendering="crispEdges" />
<rect x="751" y="724" width="1" height="7" fill="#9DB3E2" shape-rendering="crispEdges" />
<rect x="761.5" y="721.0" width="14" height="12.5" rx="1.5" fill="#C1D2FB" stroke="#D5E0FC"/>
<path d="M766.5 723.8 L770.1 727.4 L766.5 731" fill="none" stroke="#3E5380" stroke-width="2.1"/>
<rect x="7" y="734" width="770" height="1" fill="#DCD3B4" shape-rendering="crispEdges" />
</svg></body></html>
